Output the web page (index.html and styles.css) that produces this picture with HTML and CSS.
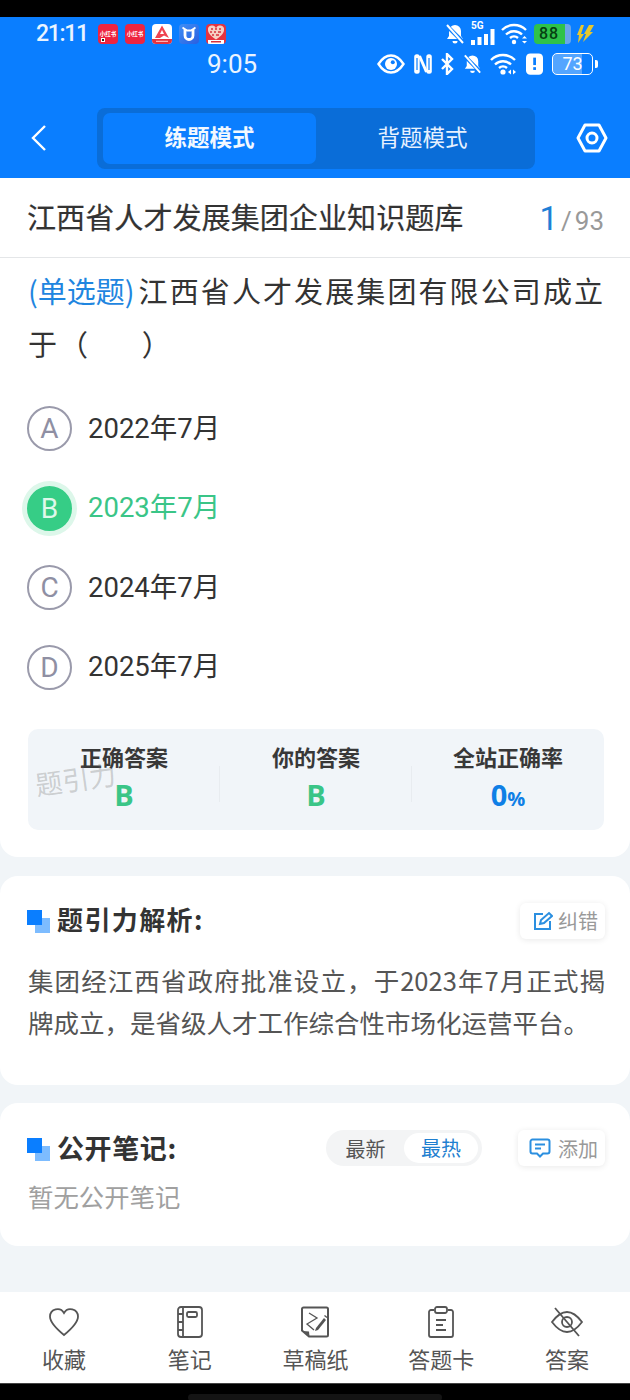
FILE: index.html
```html
<!DOCTYPE html>
<html lang="zh">
<head>
<meta charset="utf-8">
<title>题引力</title>
<link rel="stylesheet" href="styles.css">
</head>
<body>
<div class="phone">
  <div class="blackbar"></div>
  <header class="hero">
    <div class="status-row1">
      <span class="t2111">21:11</span>
      <div class="apps">
        <span class="app app-red">小红书<i class="app-dot"></i></span>
        <span class="app app-red">小红书</span>
        <span class="app app-white"><svg viewBox="0 0 20 20" width="20" height="20"><path d="M10 1.500 17 14l-5-2.500L8 14H3Z" fill="#ef4450"/><path d="M10 6l2 4H8Z" fill="#fff"/><rect y="15" width="20" height="5" fill="#e5333f"/><rect x="4" y="16.800" width="12" height="1" fill="#ffd0d0"/></svg></span>
        <span class="app app-blue"><svg viewBox="0 0 20 20" width="20" height="20"><path d="M6 5v6.500a4 4 0 0 0 8 0V5" fill="none" stroke="#fff" stroke-width="2.800"/><path d="M3.500 3.500 8 6.500h4l4.500-3" fill="none" stroke="#fff" stroke-width="1.800"/></svg></span>
        <span class="app app-heart"><svg viewBox="0 0 20 20" width="20" height="20"><path d="M10 15.500C3.500 11.500 2 8 2 6a4 4 0 0 1 8-1 4 4 0 0 1 8 1c0 2-1.500 5.500-8 9.500Z" fill="#f6cfc4"/><path d="M5 5h2M9 5h2M13 5h2M4 8h2M8 8h2M12 8h3M6 11h2M10 11h3" stroke="#d8303c" stroke-width="1.600"/><rect x="2" y="16" width="16" height="4" fill="#fff"/><rect x="5" y="17" width="10" height="1.500" fill="#d8303c"/></svg></span>
      </div>
      <div class="status-right">
        <svg class="ic" width="22" height="22" viewBox="0 0 22 22"><path d="M11 2a6 6 0 0 0-6 6v5l-2 3h16l-2-3V8a6 6 0 0 0-6-6Z" fill="#fff"/><path d="M8.500 18a2.500 2.500 0 0 0 5 0Z" fill="#fff"/><path d="M2 2l18 18" stroke="#0a7eff" stroke-width="4"/><path d="M3 2l16 18" stroke="#fff" stroke-width="2"/></svg>
        <span class="sig5g"><span class="g5">5G</span>
          <svg width="24" height="16" viewBox="0 0 24 16"><rect x="0" y="11" width="4" height="5" fill="#fff"/><rect x="6.500" y="8" width="4" height="8" fill="#fff"/><rect x="13" y="5" width="4" height="11" fill="#fff"/><rect x="19.500" y="0" width="4" height="16" fill="#fff"/></svg>
        </span>
        <svg class="ic" width="27" height="22" viewBox="0 0 27 22"><path d="M1 7a17 17 0 0 1 24 0M5 11.500a11.500 11.500 0 0 1 16 0M9 15a6 6 0 0 1 8 0" fill="none" stroke="#fff" stroke-width="2.400"/><circle cx="13" cy="19" r="2.200" fill="#fff"/><path d="M21 15.500l2.500-2.500 2.500 2.500ZM21 18l2.500 2.500L26 18Z" fill="#fff"/></svg>
        <span class="batt88"><span class="batt88-num">88</span></span>
        <svg class="bolt" width="17" height="18" viewBox="0 0 17 18"><path d="M4 0h3L4 9h3L1 18l1-8H0Z" fill="#e7c72c"/><path d="M12 0h5l-4 7h3L6 17l3-8H7Z" fill="#e7c72c"/></svg>
      </div>
    </div>
    <div class="status-row2">
      <span class="t905">9:05</span>
      <div class="status-right2">
        <svg width="28" height="20" viewBox="0 0 28 20"><path d="M1.500 10C6 3 10 1.500 14 1.500S22 3 26.500 10C22 17 18 18.500 14 18.500S6 17 1.500 10Z" fill="none" stroke="#fff" stroke-width="2.400"/><circle cx="14" cy="10" r="6" fill="#fff"/><circle cx="15.800" cy="8.200" r="2" fill="#0a7eff"/></svg>
        <svg width="20" height="22" viewBox="0 0 20 22"><rect x="1.200" y="1.200" width="5.500" height="19.600" rx="2.500" fill="#fff"/><rect x="13.300" y="1.200" width="5.500" height="19.600" rx="2.500" fill="#fff"/><path d="M6.500 3 13.500 19" stroke="#fff" stroke-width="3"/><path d="M4 5v12M16 5v12" stroke="#0a7eff" stroke-width="1.200"/></svg>
        <svg width="14" height="22" viewBox="0 0 14 22"><path d="M2 6l10 10-5 5V1l5 5L2 16" fill="none" stroke="#fff" stroke-width="2.400"/></svg>
        <svg width="21" height="22" viewBox="0 0 22 22"><path d="M11 2a6 6 0 0 0-6 6v5l-2 3h16l-2-3V8a6 6 0 0 0-6-6Z" fill="#fff"/><path d="M8.500 18a2.500 2.500 0 0 0 5 0Z" fill="#fff"/><path d="M2 2l18 18" stroke="#0a7eff" stroke-width="4"/><path d="M3 2l16 18" stroke="#fff" stroke-width="2"/></svg>
        <svg width="28" height="22" viewBox="0 0 28 22"><path d="M1 7a17 17 0 0 1 24 0M5 11.500a11.500 11.500 0 0 1 16 0M9 15a6 6 0 0 1 8 0" fill="none" stroke="#fff" stroke-width="2.400"/><circle cx="13" cy="19" r="2.600" fill="#fff"/><path d="M21 16.500v5l-3-2.500ZM23 16.500v5l3-2.500Z" fill="#fff"/></svg>
        <svg width="17" height="22" viewBox="0 0 16 20"><path d="M4 0h8a4 4 0 0 1 4 4v12a4 4 0 0 1-4 4H4a4 4 0 0 1-4-4V4a4 4 0 0 1 4-4Z" fill="#fff"/><rect x="6.800" y="4" width="2.600" height="7" fill="#0a7eff"/><rect x="6.800" y="13" width="2.600" height="2.600" fill="#0a7eff"/></svg>
        <span class="batt73"><span class="batt73-box">73</span><span class="batt73-tip"></span></span>
      </div>
    </div>
    <div class="navrow">
      <svg class="back" width="18" height="28" viewBox="0 0 18 28"><path d="M15 2 3 14l12 12" fill="none" stroke="#fff" stroke-width="2.400"/></svg>
      <div class="tabs">
        <span class="tab tab-active">练题模式</span>
        <span class="tab">背题模式</span>
      </div>
      <svg class="gear" width="32" height="30" viewBox="0 0 32 30"><path d="M9 2h14l7 13-7 13H9L2 15Z" fill="none" stroke="#fff" stroke-width="3" stroke-linejoin="round"/><circle cx="16" cy="15" r="5" fill="none" stroke="#fff" stroke-width="3"/></svg>
    </div>
  </header>

  <main class="main">
    <section class="card-q">
      <div class="titlebar">
        <span class="qtitle">江西省人才发展集团企业知识题库</span>
        <span class="count"><b class="count-cur">1</b><i class="count-sep">/</i>93</span>
      </div>
      <div class="qbody">
        <p class="qtext"><span class="qtype">(单选题)</span>江西省人才发展集团有限公司成立于（&nbsp;&nbsp;&nbsp;&nbsp;&nbsp;&nbsp;）</p>
        <ul class="opts">
          <li class="opt"><span class="opt-c">A</span><span class="opt-t">2022年7月</span></li>
          <li class="opt opt-right"><span class="opt-c">B</span><span class="opt-t">2023年7月</span></li>
          <li class="opt"><span class="opt-c">C</span><span class="opt-t">2024年7月</span></li>
          <li class="opt"><span class="opt-c">D</span><span class="opt-t">2025年7月</span></li>
        </ul>
        <div class="stats">
          <div class="stat"><span class="stat-l">正确答案</span><span class="stat-v green">B</span></div>
          <div class="stat"><span class="stat-l">你的答案</span><span class="stat-v green">B</span></div>
          <div class="stat"><span class="stat-l">全站正确率</span><span class="stat-v blue">0<small class="pct">%</small></span></div>
          <span class="wm">题引力</span>
        </div>
      </div>
    </section>

    <section class="card card-a">
      <div class="head">
        <span class="sq"></span><h2 class="h h-a">题引力解析:</h2>
        <span class="pill pill-fix">
          <svg width="20" height="20" viewBox="0 0 20 20"><path d="M10 3H2v15h15v-8" fill="none" stroke="#2b8fe0" stroke-width="2"/><path d="M7 13l1-4 8-7 3 3-8 7Z" fill="none" stroke="#2b8fe0" stroke-width="2"/></svg>纠错</span>
      </div>
      <p class="analysis">集团经江西省政府批准设立，于2023年7月正式揭牌成立，是省级人才工作综合性市场化运营平台。</p>
    </section>

    <section class="card card-n">
      <div class="head">
        <span class="sq"></span><h2 class="h h-n">公开笔记:</h2>
        <div class="seg"><span class="seg-i">最新</span><span class="seg-i seg-on">最热</span></div>
        <span class="pill pill-add">
          <svg width="22" height="20" viewBox="0 0 22 20"><path d="M3.500 1.500h15a2 2 0 0 1 2 2v10a2 2 0 0 1-2 2H14l-3 3-3-3H3.500a2 2 0 0 1-2-2v-10a2 2 0 0 1 2-2Z" fill="none" stroke="#2b8fe0" stroke-width="2"/><path d="M6 6.500h10M6 10.500h6" stroke="#2b8fe0" stroke-width="2"/></svg>添加</span>
      </div>
      <p class="empty">暂无公开笔记</p>
    </section>
  </main>

  <nav class="tabbar">
    <div class="tb"><svg width="32" height="32" viewBox="0 0 32 32"><path d="M16 29C5 20 2 15 2 10.500A7.500 7.500 0 0 1 16 7a7.500 7.500 0 0 1 14 3.500C30 15 27 20 16 29Z" fill="none" stroke="#555" stroke-width="1.800"/></svg><span>收藏</span></div>
    <div class="tb"><svg width="32" height="32" viewBox="0 0 32 32"><rect x="4" y="1" width="24" height="30" rx="3" fill="none" stroke="#555" stroke-width="1.800"/><path d="M9 1v30M4 8h5M4 16h5M4 24h5" stroke="#555" stroke-width="1.800"/><rect x="13" y="6" width="10" height="5" rx="1.500" fill="none" stroke="#555" stroke-width="1.800"/></svg><span>笔记</span></div>
    <div class="tb"><svg width="32" height="32" viewBox="0 0 32 32"><path d="M4.500 1.500h23a1.500 1.500 0 0 1 1.500 1.500v26a1.500 1.500 0 0 1-1.500 1.500H10L3 24.500V3a1.500 1.500 0 0 1 1.500-1.500Z" fill="none" stroke="#555" stroke-width="2"/><path d="M4 25l6 .500 .500 5Z" fill="#555"/><path d="M10 7l8 5-10 6 7 6" fill="none" stroke="#555" stroke-width="1.300"/><path d="M17 22l8-10 2 2-8 10-3 1Z" fill="#555"/><path d="M25.500 9.500l2.500 2" stroke="#555" stroke-width="1.500"/></svg><span>草稿纸</span></div>
    <div class="tb"><svg width="32" height="32" viewBox="0 0 32 32"><path d="M9 4H6a2 2 0 0 0-2 2v23a2 2 0 0 0 2 2h20a2 2 0 0 0 2-2V6a2 2 0 0 0-2-2h-3" fill="none" stroke="#555" stroke-width="1.800"/><rect x="10" y="1" width="12" height="6" rx="2" fill="none" stroke="#555" stroke-width="1.800"/><path d="M11 14h10M11 19h7M11 24h10" stroke="#555" stroke-width="1.800"/></svg><span>答题卡</span></div>
    <div class="tb"><svg width="34" height="32" viewBox="0 0 34 32"><path d="M2 16C8 8 13 6 17 6s9 2 15 10c-6 8-11 10-15 10S8 24 2 16Z" fill="none" stroke="#555" stroke-width="1.800"/><circle cx="17" cy="16" r="5" fill="none" stroke="#555" stroke-width="1.800"/><path d="M5 2l24 28" stroke="#555" stroke-width="1.800"/></svg><span>答案</span></div>
  </nav>
  <div class="homebar"><span class="home-pill"></span></div>
</div>
</body>
</html>
```

FILE: styles.css
```css
* { box-sizing: border-box; margin: 0; padding: 0; }
html, body { width: 630px; height: 1400px; overflow: hidden; }
body {
  font-family: "Noto Sans CJK SC", "Noto Sans", sans-serif;
  background: #f1f5f8;
  color: #333;
}
.phone { width: 630px; height: 1400px; display: flex; flex-direction: column; }
.blackbar { height: 17px; background: #000; flex: none; }
.hero { height: 161px; background: #0a7eff; flex: none; color: #fff; display: flex; flex-direction: column; }
.status-row1 { height: 29px; padding: 4px 0 0 36px; display: flex; align-items: center; }
.t2111 { font-family: Roboto, sans-serif; font-size: 23px; font-weight: 500; letter-spacing: -1.300px; color: #eaf4ff; width: 62px; }
.apps { display: flex; gap: 7px; }
.app { width: 20px; height: 20px; border-radius: 4px; overflow: hidden; display: flex; align-items: center; justify-content: center; font-size: 5.500px; font-weight: 700; white-space: nowrap; color: #fff; position: relative; }
.app-red { background: #ee2440; }
.app-dot { position: absolute; left: 3px; bottom: 2px; width: 4px; height: 4px; background: #222; border: 1px solid #fff; }
.app-white { background: #fff; }
.app-blue { background: linear-gradient(135deg, #3f8ff5, #2a5fe0); }
.app-heart { background: #e5333f; }
.status-right { margin-left: auto; margin-right: 36px; display: flex; align-items: center; gap: 5px; }
.sig5g { position: relative; width: 25px; height: 22px; display: flex; align-items: flex-end; }
.g5 { position: absolute; left: 0; top: -3px; font-family: Roboto, sans-serif; font-size: 10px; font-weight: 700; }
.batt88 { width: 37px; height: 20px; border-radius: 4px; background: linear-gradient(90deg, #2fc24a 0 84%, #69a6ea 84%); display: flex; align-items: center; padding-left: 5px; margin-left: 1px; }
.batt88-num { font-family: Roboto, sans-serif; font-size: 16px; font-weight: 500; color: #063f12; letter-spacing: .8px; }
.bolt { margin-left: 1px; }
.status-row2 { height: 35px; display: flex; align-items: center; padding-left: 207px; }
.t905 { font-family: Roboto, sans-serif; font-size: 26px; color: #eaf4ff; }
.status-right2 { margin-left: auto; margin-right: 32px; display: flex; align-items: center; gap: 7.500px; }
.batt73 { display: flex; align-items: center; margin-left: 2px; }
.batt73-box { width: 41px; height: 22px; border: 1.500px solid #fff; border-radius: 5px; background: linear-gradient(90deg, rgba(255,255,255,.3) 0 75%, transparent 75%); font-family: Roboto, sans-serif; font-size: 18px; line-height: 19px; text-align: center; }
.batt73-tip { width: 3px; height: 8px; background: #fff; border-radius: 0 2px 2px 0; margin-left: 2px; }
.navrow { flex: 1; display: flex; align-items: flex-start; padding-top: 27px; position: relative; }
.back { margin: 16px 0 0 30px; }
.tabs { margin-left: 49px; width: 438px; height: 61px; background: #0a6dd8; border-radius: 8px; padding: 5px 6px; display: flex; }
.tab { flex: 1; display: flex; align-items: center; justify-content: center; font-size: 22.500px; color: #e6f1ff; padding-bottom: 6px; }
.tab-active { flex: none; width: 213px; background: #0a7eff; border-radius: 7px; font-weight: 700; color: #f2f8ff; }
.gear { margin: 15px 0 0 41px; }

.main { flex: 1; display: flex; flex-direction: column; gap: 19px; min-height: 0; }
.card-q { background: #fff; height: 679px; border-radius: 0 0 18px 18px; flex: none; }
.titlebar { height: 80px; border-bottom: 1px solid #e4e6e8; display: flex; align-items: center; padding: 0 26px 4px 27px; justify-content: space-between; }
.qtitle { font-size: 29.100px; color: #333; font-weight: 400; -webkit-text-stroke: .2px #333; }
.count { font-family: Roboto, sans-serif; font-size: 26px; color: #999; display: flex; align-items: baseline; margin-top: 6px; }
.count-cur { font-weight: 400; font-size: 33px; color: #1f7fd6; margin-right: 3px; }
.count-sep { font-style: normal; margin-right: 3px; }
.qbody { padding: 6px 20px 0 28px; position: relative; }
.qtext { font-size: 29px; line-height: 53px; letter-spacing: 2.100px; color: #333; }
.qtype { color: #1f86e0; letter-spacing: 0; margin-right: 4px; }
.opts { list-style: none; margin-top: 36px; display: flex; flex-direction: column; gap: 34px; }
.opt { display: flex; align-items: center; height: 45.500px; font-family: Roboto, "Noto Sans CJK SC", sans-serif; font-size: 27.500px; color: #333; gap: 15px; }
.opt-t { margin-bottom: 6px; margin-left: 1px; }
.opt-c { width: 45px; height: 45px; margin-left: -1px; border: 2px solid #9a9aab; border-radius: 50%; display: flex; align-items: center; justify-content: center; color: #8f8fa3; font-size: 28px; flex: none; }
.opt-right { color: #3ac587; }
.opt-right .opt-c { background: #36cd86; border-color: #36cd86; color: #dff8ea; box-shadow: 0 0 0 5px #ddf7ea; }
.stats { margin-top: 39px; width: 576px; height: 101px; background: #f1f5f9; border-radius: 10px; display: flex; position: relative; }
.stat { flex: 1; display: flex; flex-direction: column; align-items: center; padding-top: 11px; position: relative; }
.stat + .stat::before { content: ""; position: absolute; left: -1px; top: 37px; height: 36px; border-left: 1px solid #e8ecf0; }
.stat-l { font-size: 22px; line-height: 33px; font-weight: 700; color: #383838; }
.stat-v { font-family: "Open Sans", sans-serif; font-weight: 700; font-size: 29px; line-height: 40px; margin-top: 2px; }
.green { color: #3ac587; }
.blue { color: #0f7fe6; }
.pct { font-size: 20px; }
.wm { position: absolute; left: 7px; top: 30px; font-size: 27px; color: rgba(110,110,110,.3); transform: rotate(-8deg); pointer-events: none; }

.card { background: #fff; flex: none; border-radius: 18px; padding: 0 25px 0 28px; }
.card-a { height: 209px; margin-bottom: -1px; }
.card-n { height: 143px; }
.head { display: flex; align-items: center; position: relative; }
.card-a .head { height: 89px; }
.card-n .head { height: 90px; }
.sq { width: 23px; height: 23px; flex: none; margin: 2px 7px 0 -1px; background: linear-gradient(#0a7eff, #0a7eff) 0 0 / 15px 15px no-repeat, linear-gradient(#7dbcff, #7dbcff) 100% 100% / 15px 15px no-repeat; }
.h { font-size: 25.500px; font-weight: 700; color: #333; letter-spacing: .6px; margin-bottom: 2px; }
.h-a { font-size: 26px; letter-spacing: 1.400px; margin-bottom: 4px; }
.h-n { font-size: 27px; }
.pill { margin-left: auto; height: 36px; background: #fff; border-radius: 6px; box-shadow: 0 1px 6px rgba(0,0,0,.09); display: flex; align-items: center; gap: 5px; padding: 0 7px 0 13px; font-size: 20px; color: #999; }
.seg { margin-left: auto; margin-right: 36px; height: 36px; width: 156px; background: #f3f4f5; border-radius: 18px; display: flex; align-items: center; padding: 3px 4px 3px 1px; font-size: 20px; color: #555; }
.seg-i { flex: 1; text-align: center; }
.seg-on { background: #fff; color: #1f7fd0; border-radius: 15px; line-height: 30px; flex: 0 0 74px; }
.pill-add { margin-left: 0; padding-left: 11px; gap: 7px; }
.analysis { font-size: 25.500px; line-height: 42px; color: #555; margin-top: -6px; text-align: justify; }
.empty { font-size: 25.400px; color: #a0a0a0; line-height: 36px; margin-top: -15px; }

.tabbar { height: 91px; background: #fff; flex: none; display: flex; padding: 14px 0 0 1px; justify-content: space-between; }
.tb { width: 126px; display: flex; flex-direction: column; align-items: center; font-size: 22px; color: #555; line-height: 30px; gap: 5px; }
.homebar { height: 17px; flex: none; background: #000; display: flex; justify-content: center; align-items: flex-start; padding-top: 10px; border-top: 1px solid #444; }
.home-pill { width: 254px; height: 7px; border-radius: 4px; background: #141414; }
```
